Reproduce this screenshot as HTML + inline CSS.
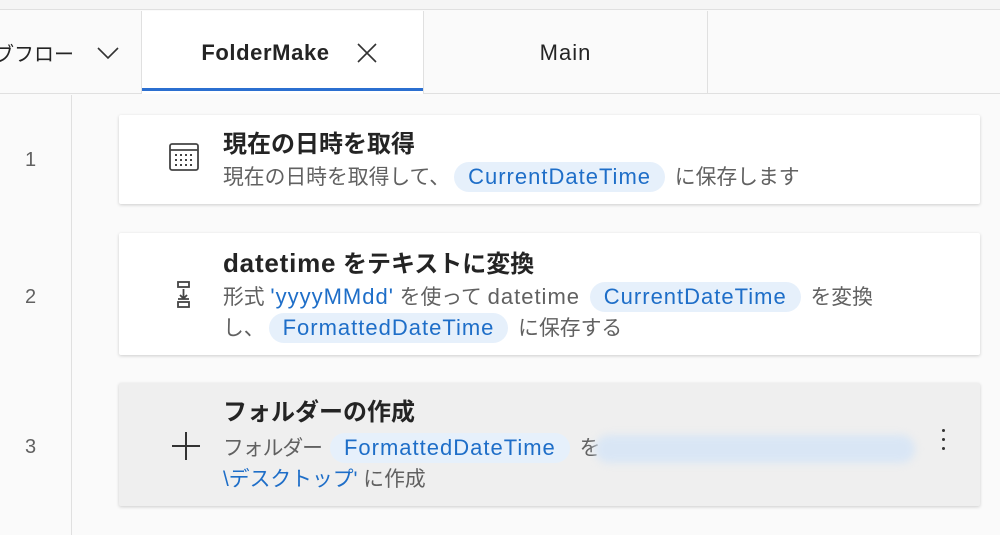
<!DOCTYPE html>
<html><head><meta charset="utf-8"><style>
*{margin:0;padding:0;box-sizing:border-box}
body{width:1000px;height:535px;overflow:hidden;background:#fafafa;font-family:"Liberation Sans","Noto Sans CJK JP",sans-serif;position:relative;color:#242424}
.top{position:absolute;left:0;top:0;width:1000px;height:10px;background:#f5f5f5;border-bottom:1px solid #e0e0e0}
.bar{position:absolute;left:0;top:11px;width:1000px;height:83px;background:#fafafa;border-bottom:1px solid #e0e0e0}
.tab{position:absolute;top:11px;height:83px;display:flex;align-items:center;justify-content:center;font-size:22px}
.gut{position:absolute;left:71px;top:95px;width:1px;height:440px;background:#e0e0e0}
.num{position:absolute;left:25px;font-size:20px;color:#616161}
.card{position:absolute;left:119px;width:861px;background:#fff;box-shadow:0 1px 3px rgba(0,0,0,.18);border-radius:2px}
.t{position:absolute;left:104px;font-size:24px;font-weight:bold;color:#242424;line-height:30px;white-space:nowrap}
.s{position:absolute;left:104px;font-size:20.8px;color:#616161;line-height:32px;white-space:nowrap}
.c{display:inline-block;background:#e6f0fb;color:#1e6ec8;border-radius:15px;padding:0 14px;line-height:30px;margin:0 4px}
.l{font-size:22px;letter-spacing:1px}
.b{color:#1e6ec8}
</style></head><body>
<div class="top"></div>
<div class="bar"></div>
<div class="tab" style="left:0;width:140px;justify-content:flex-start;font-size:20px">
<span style="margin-left:-6px">ブフロー</span>
<svg width="24" height="14" style="margin-left:22px" viewBox="0 0 24 14"><path d="M2 2l10 10 10-10" fill="none" stroke="#333" stroke-width="1.6"/></svg></div>
<div class="tab" style="left:141px;width:283px;background:#fff;border-left:1px solid #e0e0e0;border-right:1px solid #e0e0e0;font-weight:bold">
<span style="margin-left:14px;letter-spacing:0.6px">FolderMake</span>
<svg width="22" height="22" style="margin-left:26px" viewBox="0 0 22 22"><path d="M2 2l18 18M20 2L2 20" stroke="#333" stroke-width="1.6"/></svg>
<div style="position:absolute;left:0;right:0;bottom:3px;height:3px;background:#2b6fd0"></div></div>
<div class="tab" style="left:424px;width:284px;border-right:1px solid #e0e0e0;letter-spacing:1px">Main</div>
<div class="gut"></div>
<div class="num" style="top:149px">1</div>
<div class="num" style="top:286px">2</div>
<div class="num" style="top:436px">3</div>

<div class="card" style="top:115px;height:89px">
<svg style="position:absolute;left:49px;top:26px" width="32" height="32" viewBox="0 0 32 32"><rect x="2" y="3" width="28" height="26" rx="2" fill="none" stroke="#444" stroke-width="1.8"/><line x1="2" y1="9" x2="30" y2="9" stroke="#444" stroke-width="1.8"/><g fill="#444"><rect x="7" y="13" width="2" height="2"/><rect x="12" y="13" width="2" height="2"/><rect x="17" y="13" width="2" height="2"/><rect x="22" y="13" width="2" height="2"/><rect x="7" y="18" width="2" height="2"/><rect x="12" y="18" width="2" height="2"/><rect x="17" y="18" width="2" height="2"/><rect x="22" y="18" width="2" height="2"/><rect x="7" y="23" width="2" height="2"/><rect x="12" y="23" width="2" height="2"/><rect x="17" y="23" width="2" height="2"/><rect x="22" y="23" width="2" height="2"/></g></svg>
<div class="t" style="top:15px">現在の日時を取得</div>
<div class="s" style="top:47px">現在の日時を取得して、<span class="c l">CurrentDateTime</span> に保存します</div>
</div>

<div class="card" style="top:233px;height:122px">
<svg style="position:absolute;left:56px;top:47px" width="18" height="30" viewBox="0 0 18 30"><g fill="none" stroke="#444" stroke-width="1.8"><rect x="3" y="2" width="11" height="5"/><rect x="3" y="22" width="11" height="5"/><path d="M8.5 9v9M5 15l3.5 3.5L12 15M3 19h11"/></g></svg>
<div class="t" style="top:15px"><span style="font-size:26px;letter-spacing:0.8px">datetime</span> をテキストに変換</div>
<div class="s" style="top:48px">形式 <span class="b l">'yyyyMMdd'</span> を使って <span class="l">datetime</span> <span class="c l">CurrentDateTime</span> を変換</div>
<div class="s" style="top:80px">し、<span class="c l">FormattedDateTime</span> に保存する</div>
</div>

<div class="card" style="top:383px;height:123px;background:#efefef">
<svg style="position:absolute;left:52px;top:48px" width="30" height="30" viewBox="0 0 30 30"><path d="M15 1v28M1 15h28" stroke="#333" stroke-width="2"/></svg>
<div class="t" style="top:15px">フォルダーの作成</div>
<div class="s" style="top:50px"><span style="letter-spacing:-1px">フォルダー</span><span class="c l" style="margin-left:8px">FormattedDateTime</span> を</div>
<div style="position:absolute;left:476px;top:52px;width:320px;height:28px;border-radius:14px;background:#d9e6f5;filter:blur(4px)"></div>
<div class="s" style="top:81px"><span class="b">\デスクトップ'</span> に作成</div>
<div style="position:absolute;left:823px;top:46px;width:4px;line-height:0">
<div style="width:3px;height:3px;background:#333;border-radius:50%;margin-bottom:6px"></div><div style="width:3px;height:3px;background:#333;border-radius:50%;margin-bottom:6px"></div><div style="width:3px;height:3px;background:#333;border-radius:50%"></div></div>
</div>
</body></html>
